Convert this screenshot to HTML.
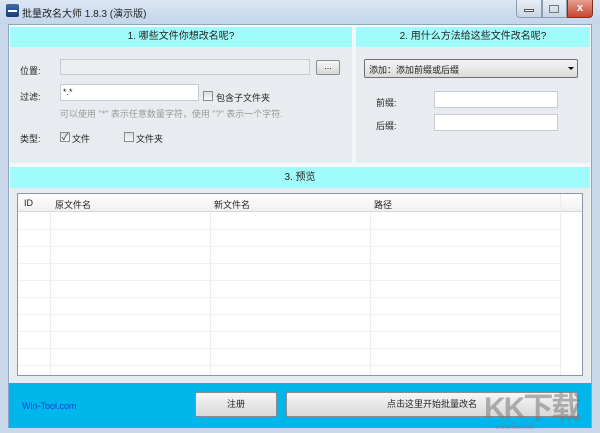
<!DOCTYPE html>
<html><head><meta charset="utf-8"><style>
*{margin:0;padding:0;box-sizing:border-box}
body{width:600px;height:433px;overflow:hidden;background:#c9d8ea;font-family:"Liberation Sans","Noto Sans CJK SC",sans-serif;font-size:9px;color:#222;position:relative}
.a{position:absolute}
.title{left:0;top:0;width:600px;height:24px;background:linear-gradient(#dbe7f4,#c3d5ea);}
.client{left:8px;top:24px;width:584px;height:404px;background:#f4f6f8;border:1px solid #8ea4c0}
.panel{background:#e8ecf0}
.hdr{background:#9ffcfb;text-align:center;font-size:10px;line-height:20px;color:#222}
.inp{background:#fff;border:1px solid #c8ccd2}
.cb{width:10px;height:10px;border:1px solid #8a8a8a;background:linear-gradient(#ddd,#fafafa)}
.btn{background:linear-gradient(#f6f6f6,#d9d9d9);border:1px solid #8c8c8c;border-radius:2px;text-align:center}
.vl{width:1px;background:#ececec}
.hl{height:1px;background:#f0f0f0}
</style></head><body>
<div class="a title"></div>
<div class="a" style="left:6px;top:4px;width:13px;height:13px;background:linear-gradient(#3f6aa8,#1a3a72);border-radius:2px"></div>
<div class="a" style="left:8px;top:10px;width:9px;height:2px;background:#fff"></div>
<div class="a" style="left:22px;top:5px;font-size:10px;color:#222">批量改名大师 1.8.3 (演示版)</div>
<div class="a" style="left:516px;top:0;width:26px;height:18px;background:linear-gradient(#e8eef6,#c9d6e6);border:1px solid #8a9bb2;border-top:none;border-radius:0 0 0 4px"></div>
<div class="a" style="left:524px;top:9px;width:10px;height:3px;background:#fff;border:1px solid #555"></div>
<div class="a" style="left:542px;top:0;width:25px;height:18px;background:linear-gradient(#e8eef6,#c9d6e6);border:1px solid #8a9bb2;border-top:none"></div>
<div class="a" style="left:549px;top:5px;width:10px;height:8px;border:1px solid #777"></div>
<div class="a" style="left:567px;top:0;width:26px;height:18px;background:linear-gradient(#e8a090,#c84530);border:1px solid #803020;border-top:none;border-radius:0 0 4px 0;color:#fff;font-weight:bold;text-align:center;font-size:11px;line-height:16px">x</div>

<div class="a client"></div>
<div class="a panel" style="left:10px;top:27px;width:342px;height:136px"></div>
<div class="a hdr" style="left:10px;top:27px;width:342px;height:20px">1. 哪些文件你想改名呢?</div>
<div class="a panel" style="left:356px;top:27px;width:234px;height:136px"></div>
<div class="a hdr" style="left:356px;top:27px;width:234px;height:20px">2. 用什么方法给这些文件改名呢?</div>

<div class="a" style="left:20px;top:64px">位置:</div>
<div class="a inp" style="left:60px;top:59px;width:250px;height:16px;background:#eceef0"></div>
<div class="a btn" style="left:316px;top:60px;width:24px;height:15px;line-height:11px">...</div>
<div class="a" style="left:20px;top:90px">过滤:</div>
<div class="a inp" style="left:60px;top:84px;width:139px;height:17px"></div>
<div class="a" style="left:63px;top:87px">*.*</div>
<div class="a cb" style="left:203px;top:91px"></div>
<div class="a" style="left:216px;top:91px">包含子文件夹</div>
<div class="a" style="left:60px;top:107px;color:#999">可以使用 "*" 表示任意数量字符，使用 "?" 表示一个字符.</div>
<div class="a" style="left:20px;top:132px">类型:</div>
<div class="a cb" style="left:60px;top:132px;font-size:9px;line-height:8px;text-align:center">✓</div>
<div class="a" style="left:72px;top:132px">文件</div>
<div class="a cb" style="left:124px;top:132px"></div>
<div class="a" style="left:136px;top:132px">文件夹</div>

<div class="a" style="left:364px;top:59px;width:214px;height:19px;border:1px solid #707070;border-radius:2px;background:linear-gradient(#f4f4f4,#dcdcdc);padding:3px 4px">添加：添加前缀或后缀</div>
<div class="a" style="left:568px;top:67px;width:0;height:0;border-left:3px solid transparent;border-right:3px solid transparent;border-top:3px solid #000"></div>
<div class="a" style="left:376px;top:96px">前缀:</div>
<div class="a inp" style="left:434px;top:91px;width:124px;height:17px"></div>
<div class="a" style="left:376px;top:119px">后缀:</div>
<div class="a inp" style="left:434px;top:114px;width:124px;height:17px"></div>

<div class="a panel" style="left:10px;top:167px;width:580px;height:216px"></div>
<div class="a hdr" style="left:10px;top:167px;width:580px;height:21px;line-height:21px">3. 预览</div>
<div class="a" style="left:17px;top:193px;width:566px;height:183px;background:#fff;border:1px solid #8d96a0"></div>
<div class="a" style="left:18px;top:194px;width:564px;height:18px;background:linear-gradient(#fff,#f0f0f0);border-bottom:1px solid #d8d8d8"></div>
<div class="a" style="left:24px;top:198px">ID</div>
<div class="a" style="left:55px;top:198px">原文件名</div>
<div class="a" style="left:214px;top:198px">新文件名</div>
<div class="a" style="left:374px;top:198px">路径</div>
<div class="a vl" style="left:50px;top:212px;height:163px"></div>
<div class="a vl" style="left:210px;top:212px;height:163px"></div>
<div class="a vl" style="left:370px;top:212px;height:163px"></div>
<div class="a vl" style="left:560px;top:194px;height:181px"></div>
<div class="a hl" style="left:18px;top:229px;width:542px"></div>
<div class="a hl" style="left:18px;top:246px;width:542px"></div>
<div class="a hl" style="left:18px;top:263px;width:542px"></div>
<div class="a hl" style="left:18px;top:280px;width:542px"></div>
<div class="a hl" style="left:18px;top:297px;width:542px"></div>
<div class="a hl" style="left:18px;top:314px;width:542px"></div>
<div class="a hl" style="left:18px;top:331px;width:542px"></div>
<div class="a hl" style="left:18px;top:348px;width:542px"></div>
<div class="a hl" style="left:18px;top:365px;width:542px"></div>

<div class="a" style="left:9px;top:383px;width:582px;height:45px;background:#00b6ea"></div>
<div class="a" style="left:22px;top:401px;color:#1a3fd6;font-size:9px">Win-Tool.com</div>
<div class="a btn" style="left:195px;top:392px;width:82px;height:25px;line-height:23px">注册</div>
<div class="a btn" style="left:286px;top:392px;width:292px;height:25px;line-height:23px">点击这里开始批量改名</div>
<div class="a" style="left:484px;top:383px;font-size:30px;font-weight:bold;color:rgba(120,120,120,0.55);letter-spacing:-2px">KK下载</div>
<div class="a" style="left:495px;top:424px;font-size:7px;color:rgba(120,120,120,0.6)">www.kkx.net</div>
</body></html>
